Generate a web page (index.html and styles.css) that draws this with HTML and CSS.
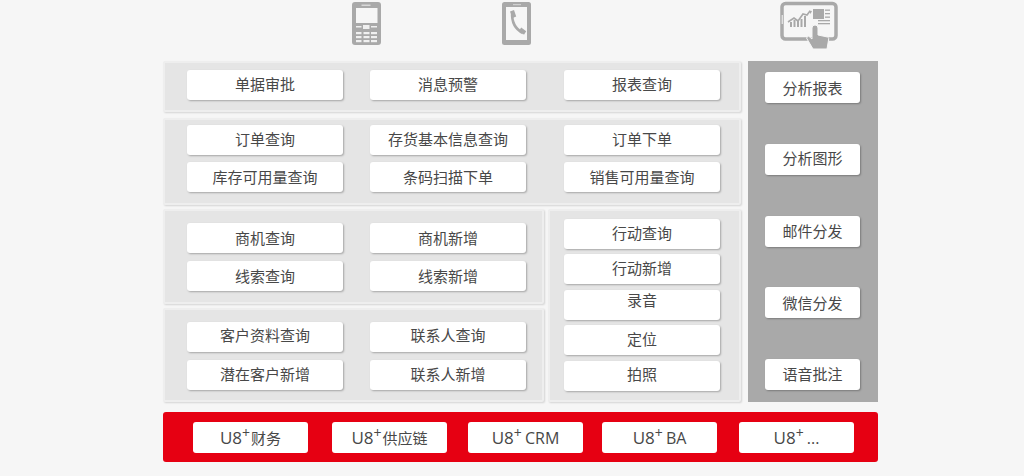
FILE: index.html
```html
<!DOCTYPE html>
<html lang="zh-CN">
<head>
<meta charset="utf-8">
<title>U8+ 移动应用</title>
<link rel="stylesheet" href="styles.css">
</head>
<body>
<div class="page">
  <div class="icons">
    <svg class="icon icon-phone" viewBox="0 0 29 43" width="29" height="43">
      <rect width="29" height="43" rx="3" fill="#a9a9a9"/>
      <rect x="9.5" y="2.5" width="9" height="1.5" fill="#d8d8d8"/>
      <rect x="4" y="6" width="21.5" height="15" fill="#f6f6f6"/>
      <g fill="#f0f0f0">
        <rect x="11" y="23" width="6.5" height="4"/>
        <rect x="4" y="24" width="5.5" height="1.5"/><rect x="19" y="24" width="6" height="1.5"/>
        <rect x="4" y="30" width="5.5" height="2.2"/><rect x="11.5" y="30" width="6" height="2.2"/><rect x="19" y="30" width="6" height="2.2"/>
        <rect x="4" y="34" width="5.5" height="2.2"/><rect x="11.5" y="34" width="6" height="2.2"/><rect x="19" y="34" width="6" height="2.2"/>
        <rect x="4" y="38" width="5.5" height="2.2"/><rect x="11.5" y="38" width="6" height="2.2"/><rect x="19" y="38" width="6" height="2.2"/>
      </g>
    </svg>
    <svg class="icon icon-call" viewBox="0 0 29 43" width="29" height="43">
      <rect width="29" height="43" rx="2.5" fill="#a9a9a9"/>
      <rect x="11" y="2" width="8" height="1.2" fill="#d0d0d0"/>
      <rect x="4" y="5" width="21" height="33" fill="#f6f6f6"/>
      <path d="M10.200 10C9.500 20 13 27 21 31" fill="none" stroke="#a9a9a9" stroke-width="2.600"/>
      <path d="M8 9.500l4-1.500 2.200 6.500-3.600 1.600zM17.200 28.600l2-3 5 3.600-2.200 3.600z" fill="#a9a9a9"/>
    </svg>
    <svg class="icon icon-report" viewBox="0 0 60 50" width="60" height="50">
      <rect x="2" y="3.500" width="54" height="35.500" rx="3.500" fill="#f6f6f6" stroke="#a9a9a9" stroke-width="3.500"/>
      <rect x="1.600" y="15" width="1.400" height="9" fill="#e0e0e0"/>
      <g fill="#a9a9a9">
        <rect x="33" y="9" width="11" height="10"/>
        <rect x="45" y="9.500" width="5" height="1.300"/><rect x="45" y="13" width="5" height="1.300"/><rect x="45" y="16.500" width="5" height="1.300"/>
        <rect x="38" y="20" width="12" height="1.300"/><rect x="38" y="23" width="12" height="1.300"/>
        <rect x="10" y="22" width="2" height="5"/><rect x="13.500" y="20" width="2" height="7"/><rect x="17" y="21" width="2" height="6"/><rect x="20.500" y="19" width="2" height="8"/><rect x="24" y="16" width="2" height="11"/>
      </g>
      <path d="M8 22l6-4 4 3 5-7 4 1 3-4" fill="none" stroke="#a9a9a9" stroke-width="1.600"/>
      <path d="M29 10.500l3 .5-1.500 3z" fill="#a9a9a9"/>
      <path d="M33 49L26.500 38l2-2 3.500 3V28a3 3 0 0 1 6 0v7l9.500 2c1 .3 1.300 1 1.200 2L47 49z" fill="#a9a9a9" stroke="#f6f6f6" stroke-width="1"/>
    </svg>
  </div>

  <main class="board">
    <div class="left">
      <section class="panel panel-first grid3">
        <div class="btn btn-up">单据审批</div><div class="btn btn-up">消息预警</div><div class="btn btn-up">报表查询</div>
      </section>
      <section class="panel panel-second grid3">
        <div class="btn btn-up">订单查询</div><div class="btn btn-up">存货基本信息查询</div><div class="btn btn-up">订单下单</div>
        <div class="btn">库存可用量查询</div><div class="btn">条码扫描下单</div><div class="btn">销售可用量查询</div>
      </section>
      <div class="lower">
        <div class="lower-left">
          <section class="panel panel-pair grid2">
            <div class="btn">商机查询</div><div class="btn">商机新增</div>
            <div class="btn">线索查询</div><div class="btn">线索新增</div>
          </section>
          <section class="panel panel-pair grid2">
            <div class="btn btn-up">客户资料查询</div><div class="btn btn-up">联系人查询</div>
            <div class="btn">潜在客户新增</div><div class="btn">联系人新增</div>
          </section>
        </div>
        <section class="panel panel-actions">
          <div class="btn">行动查询</div>
          <div class="btn btn-up">行动新增</div>
          <div class="btn btn-high">录音</div>
          <div class="btn btn-up">定位</div>
          <div class="btn btn-up">拍照</div>
        </section>
      </div>
    </div>
    <aside class="side">
      <div class="btn btn-down">分析报表</div>
      <div class="btn btn-up">分析图形</div>
      <div class="btn">邮件分发</div>
      <div class="btn btn-down">微信分发</div>
      <div class="btn">语音批注</div>
    </aside>
  </main>

  <footer class="base">
    <div class="btn base-btn"><span class="label"><span class="u8">U8</span><sup>+</sup><span class="zh">财务</span></span></div>
    <div class="btn base-btn"><span class="label"><span class="u8">U8</span><sup>+</sup><span class="zh">供应链</span></span></div>
    <div class="btn base-btn"><span class="label"><span class="u8">U8</span><sup>+</sup> CRM</span></div>
    <div class="btn base-btn"><span class="label"><span class="u8">U8</span><sup>+</sup> BA</span></div>
    <div class="btn base-btn"><span class="label"><span class="u8">U8</span><sup>+</sup> ...</span></div>
  </footer>
</div>
</body>
</html>
```

FILE: styles.css
```css
html, body {
  margin: 0;
  padding: 0;
  height: 100%;
  overflow: hidden;
  background: #f6f6f6;
}

body {
  font-family: "Open Sans", "Noto Sans CJK SC", sans-serif;
  font-size: 15px;
  color: #484848;
}

.page {
  width: 715px;
  margin-left: 163px;
}

.icons {
  height: 61px;
  display: flex;
  align-items: flex-start;
  padding-top: 2px;
  box-sizing: border-box;
}

.icon {
  display: block;
  flex: none;
  filter: blur(0.5px);
}

.icon-phone { margin-left: 189px; }
.icon-call { margin-left: 121px; }
.icon-report { margin-left: 249px; margin-top: -2px; }

.board {
  display: flex;
  gap: 7px;
  height: 341px;
}

.left {
  width: 578px;
  display: flex;
  flex-direction: column;
  gap: 6px;
}

.panel {
  box-sizing: border-box;
  background: #e5e5e5;
  border: 2px solid #eeeeee;
  border-radius: 2px;
  box-shadow: 1px 1px 2px rgba(0, 0, 0, 0.14);
}

.grid3 {
  display: grid;
  grid-template-columns: 183px 194px 157px;
  justify-items: start;
  align-content: start;
  padding-left: 22px;
}

.grid2 {
  display: grid;
  grid-template-columns: 183px 157px;
  justify-items: start;
  align-content: start;
  padding-left: 22px;
}

.panel-first { height: 51px; padding-top: 7px; }
.panel-second { height: 87px; padding-top: 5px; row-gap: 7px; margin-bottom: -2px; }

.lower {
  display: flex;
  gap: 4px;
  flex: 1;
  min-height: 0;
}

.lower-left {
  width: 381px;
  display: flex;
  flex-direction: column;
  gap: 4px;
}

.panel-pair {
  height: 95px;
  padding-top: 12px;
  row-gap: 8px;
}

.panel-actions {
  width: 193px;
  display: flex;
  flex-direction: column;
  padding: 7.5px 0 0 14px;
  gap: 5.5px;
}

.btn {
  box-sizing: border-box;
  width: 156px;
  height: 30px;
  background: #fff;
  border-radius: 3px;
  box-shadow: 1px 1px 2px rgba(0, 0, 0, 0.28);
  display: flex;
  align-items: center;
  justify-content: center;
  line-height: 1;
}

.btn-up { padding-bottom: 2px; }
.btn-down { padding-top: 2px; }
.btn-high { padding-bottom: 8px; }

.side {
  width: 130px;
  background: #a9a9a9;
  box-sizing: border-box;
  padding: 11px 18px 12px 17px;
  display: flex;
  flex-direction: column;
  justify-content: space-between;
}

.side .btn {
  width: 95px;
  height: 31px;
}

.base {
  margin-top: 10px;
  height: 50px;
  background: #e60012;
  border-radius: 3px;
  display: grid;
  grid-template-columns: 139px 136px 134px 137px 115px;
  align-items: center;
  padding-left: 30px;
  box-sizing: border-box;
}

.base-btn {
  width: 115px;
  height: 31px;
  font-size: 16px;
  border-radius: 3px;
  box-shadow: none;
}

.label { white-space: pre; word-spacing: -2px; }
.u8 { font-size: 17px; }
.zh { font-size: 15px; }

.base-btn sup {
  font-size: 14px;
  line-height: 0;
  position: relative;
  top: -6px;
  vertical-align: baseline;
  margin-right: 1px;
}
```
